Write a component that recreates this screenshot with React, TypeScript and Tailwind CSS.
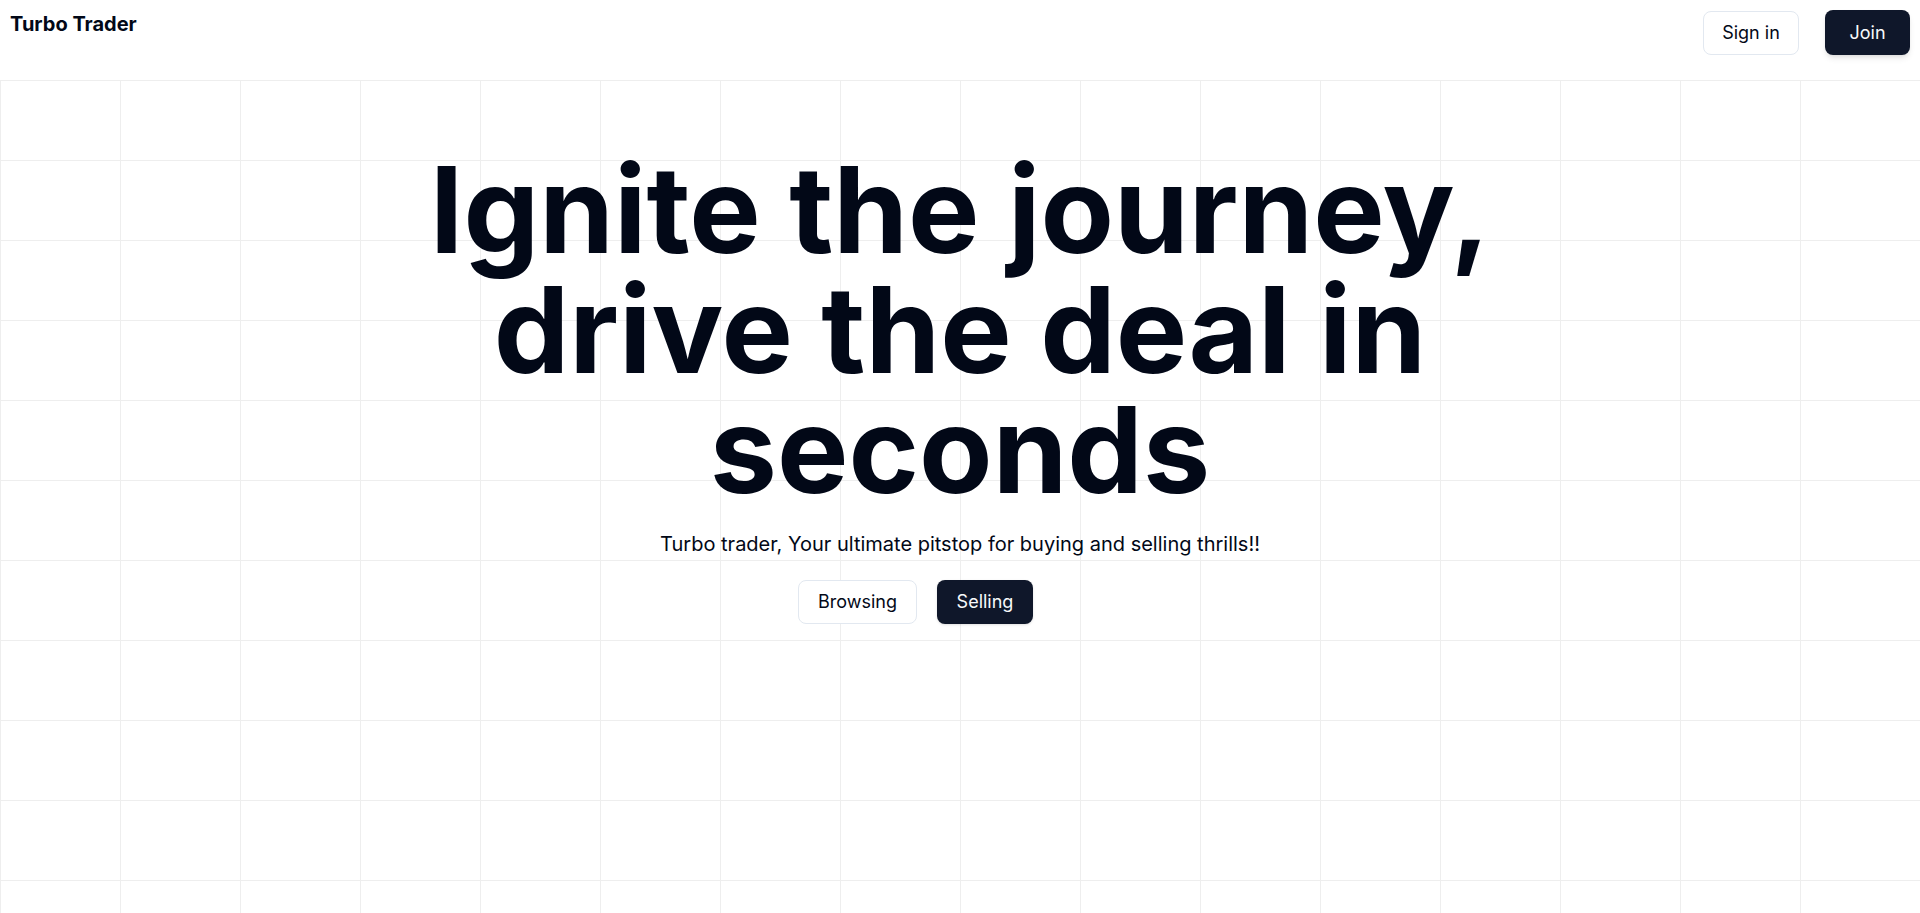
import React from 'react';

const Header: React.FC = () => {
  return (
    <header className="h-20 flex justify-between items-start p-2.5">
      <h2 className="text-xl font-bold text-[#020817]">Turbo Trader</h2>
      <div className="flex items-center gap-[26px]">
        <button className="h-11 w-[96px] rounded-lg border border-[#e2e8f0] bg-white text-lg text-[#020817]">
          Sign in
        </button>
        <button className="h-[45px] w-[85px] rounded-lg bg-[#0f172a] text-lg text-[#f8fafc] shadow-md">
          Join
        </button>
      </div>
    </header>
  );
};

const App: React.FC = () => {
  return (
    <div className="h-screen flex flex-col overflow-hidden bg-white font-['Inter',sans-serif]">
      <Header />

      <main className="flex-1 bg-[linear-gradient(to_right,#eeeeee_1px,transparent_1px),linear-gradient(to_bottom,#eeeeee_1px,transparent_1px)] bg-[size:120px_80px]">
        <div className="flex flex-col items-center gap-5 pt-[70px]">
          <h1 className="max-w-6xl text-center text-[120px] leading-none font-bold text-[#020817]">
            Ignite the journey, drive the deal in seconds
          </h1>
          <p className="text-xl text-[#020817]">
            Turbo trader, Your ultimate pitstop for buying and selling thrills!!
          </p>
          <div className="flex items-center gap-5 mt-0.5 mr-[89px]">
            <button className="h-11 w-[119px] rounded-lg border border-[#e2e8f0] bg-white text-lg text-[#020817]">
              Browsing
            </button>
            <button className="h-11 w-[96px] rounded-lg bg-[#0f172a] text-lg text-[#f8fafc] shadow-sm">
              Selling
            </button>
          </div>
        </div>
      </main>
    </div>
  );
};

export default App;
